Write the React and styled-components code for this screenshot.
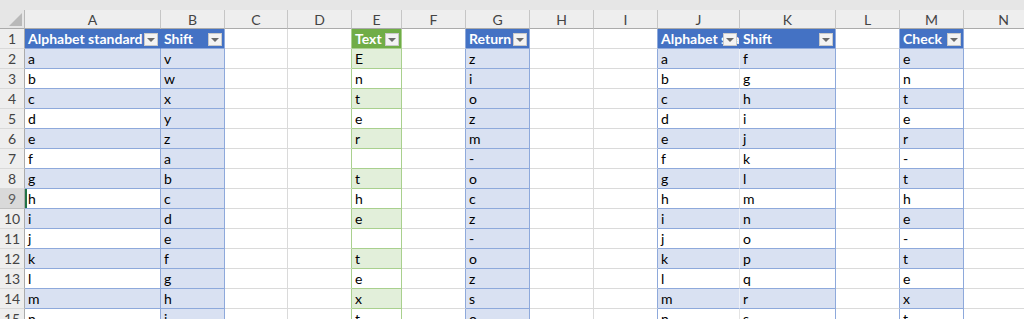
import React from 'react'
import styled, { createGlobalStyle } from 'styled-components'

const GlobalStyle = createGlobalStyle`
  html, body {
    margin: 0;
    padding: 0;
    background: #ffffff;
    overflow: hidden;
  }
  body {
    font-family: Lato, "Liberation Sans", sans-serif;
  }
`

const gridLine = '#dadada'
const headLine = '#c6c6c6'

const themes = {
  blue: { head: '#4472c4', band: '#d9e1f2', line: '#8ea9db' },
  green: { head: '#70ad47', band: '#e2efda', line: '#a9d08e' },
}

const tables = { t1: 'blue', t2: 'green', t3: 'blue', t4: 'blue', t5: 'blue' }

const cols = [
  { k: 'A', w: 136, t: 't1' },
  { k: 'B', w: 64, t: 't1', lastCol: true },
  { k: 'C', w: 63 },
  { k: 'D', w: 64 },
  { k: 'E', w: 50, t: 't2' },
  { k: 'F', w: 64 },
  { k: 'G', w: 64, t: 't3', lastCol: true },
  { k: 'H', w: 64 },
  { k: 'I', w: 64 },
  { k: 'J', w: 82, t: 't4' },
  { k: 'K', w: 96, t: 't4' },
  { k: 'L', w: 64 },
  { k: 'M', w: 64, t: 't5' },
  { k: 'N', w: 80 },
]

const data = {
  A: ['Alphabet standard', ...'abcdefghijklmn'],
  B: ['Shift', ...'vwxyzabcdefghi'],
  E: ['Text', 'E', 'n', 't', 'e', 'r', '', 't', 'h', 'e', '', 't', 'e', 'x', 't'],
  G: ['Return', 'z', 'i', 'o', 'z', 'm', '-', 'o', 'c', 'z', '-', 'o', 'z', 's', 'o'],
  J: ['Alphabet standard', ...'abcdefghijklmn'],
  K: ['Shift', ...'fghijklmnopqrs'],
  M: ['Check', 'e', 'n', 't', 'e', 'r', '-', 't', 'h', 'e', '-', 't', 'e', 'x', 't'],
}

const rows = Array.from({ length: 15 }, (_, i) => i + 1)
const activeRow = 9

const TopStrip = styled.div`
  height: 10px;
  background: #e6e6e6;
`

const Sheet = styled.div`
  display: grid;
  grid-template-columns: 25px ${cols.map(c => `${c.w}px`).join(' ')};
  grid-template-rows: 19px;
  grid-auto-rows: 20px;
  background: #ffffff;
`

const Corner = styled.div`
  position: relative;
  background: #e6e6e6;
  border-right: 1px solid #b8b8b8;
  border-bottom: 1px solid #ababab;
  box-sizing: border-box;

  &::after {
    content: '';
    position: absolute;
    right: 2px;
    bottom: 2px;
    width: 0;
    height: 0;
    border-left: 13px solid transparent;
    border-bottom: 13px solid #b9b9b9;
  }
`

const ColHead = styled.div`
  background: #eeeeee;
  border-right: 1px solid ${headLine};
  border-bottom: 1px solid #ababab;
  box-sizing: border-box;
  text-align: center;
  font-size: 14px;
  line-height: 19px;
  color: #444444;
`

const RowHead = styled.div`
  background: ${p => (p.$active ? '#d9d9d9' : '#eeeeee')};
  border-right: 1px solid #ababab;
  border-bottom: 1px solid ${p => (p.$active ? '#c0c0c0' : '#d9d9d9')};
  box-sizing: border-box;
  text-align: center;
  font-size: 14px;
  line-height: 20px;
  color: ${p => (p.$active ? '#5a5a5a' : '#444444')};
`

const Cell = styled.div`
  position: relative;
  box-sizing: border-box;
  padding: 0 3px;
  font-size: 14px;
  line-height: 20px;
  white-space: nowrap;
  overflow: hidden;
  background: ${p => p.$bg};
  color: ${p => (p.$head ? '#ffffff' : '#000000')};
  font-weight: ${p => (p.$head ? 700 : 400)};
  border-right: 1px solid ${p => p.$right};
  border-bottom: 1px solid ${p => p.$bottom};
  box-shadow: ${p => (p.$active ? 'inset 2px 0 0 #217346' : 'none')};
`

const FilterButton = styled.span`
  position: absolute;
  right: 2px;
  bottom: 2px;
  width: 14px;
  height: 13px;
  box-sizing: border-box;
  background: #f3f3f3;
  border: 1px solid #c9c9c9;
  display: flex;
  align-items: center;
  justify-content: center;

  &::after {
    content: '';
    width: 0;
    height: 0;
    border-left: 4px solid transparent;
    border-right: 4px solid transparent;
    border-top: 4px solid #6a6a6a;
  }
`

function cellProps(ci, r) {
  const c = cols[ci]
  const n = cols[ci + 1]
  const th = c.t ? themes[tables[c.t]] : null
  const head = !!c.t && r === 1

  let bg = '#ffffff'
  if (th) {
    if (head) bg = th.head
    else if (c.lastCol || r % 2 === 0) bg = th.band
  }

  let right = gridLine
  if (c.t && (!n || n.t !== c.t)) right = th.line
  else if (c.t && n.t === c.t) right = head ? th.head : n.lastCol ? th.line : r % 2 === 0 ? '#eef1f8' : '#e4e4e4'
  else if (n && n.t) right = themes[tables[n.t]].line

  const bottom = th ? th.line : gridLine

  return { $bg: bg, $right: right, $bottom: bottom, $head: head }
}

export default function App() {
  return (
    <>
      <GlobalStyle />
      <TopStrip />
      <Sheet>
        <Corner />
        {cols.map(c => (
          <ColHead key={`h-${c.k}`}>{c.k}</ColHead>
        ))}
        {rows.map(r => (
          <React.Fragment key={`r-${r}`}>
            <RowHead $active={r === activeRow}>{r}</RowHead>
            {cols.map((c, ci) => {
              const props = cellProps(ci, r)
              const value = data[c.k] ? data[c.k][r - 1] : ''
              return (
                <Cell
                  key={`${c.k}${r}`}
                  {...props}
                  $active={r === activeRow && c.k === 'A'}
                >
                  {value}
                  {props.$head && <FilterButton />}
                </Cell>
              )
            })}
          </React.Fragment>
        ))}
      </Sheet>
    </>
  )
}
